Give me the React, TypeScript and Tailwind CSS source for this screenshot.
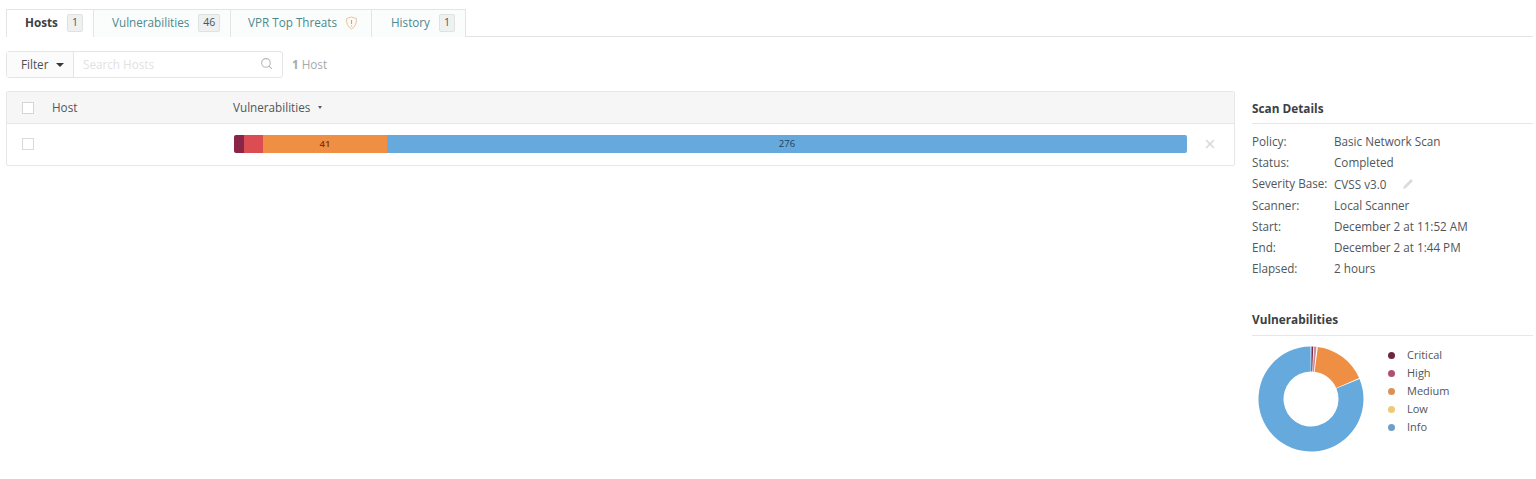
import { Search, X } from 'lucide-react';

const details = [
  ['Policy:', 'Basic Network Scan'],
  ['Status:', 'Completed'],
  ['Severity Base:', 'CVSS v3.0'],
  ['Scanner:', 'Local Scanner'],
  ['Start:', 'December 2 at 11:52 AM'],
  ['End:', 'December 2 at 1:44 PM'],
  ['Elapsed:', '2 hours'],
];

const legend = [
  ['Critical', 'bg-[#6d2743]'],
  ['High', 'bg-[#b0506f]'],
  ['Medium', 'bg-[#d9915c]'],
  ['Low', 'bg-[#eccb77]'],
  ['Info', 'bg-[#6f9fc8]'],
];

function slice(start: number, end: number) {
  const R = 52.5;
  const r = 27.5;
  const pt = (rad: number, deg: number) => {
    const a = (deg * Math.PI) / 180;
    return `${(rad * Math.sin(a)).toFixed(2)} ${(-rad * Math.cos(a)).toFixed(2)}`;
  };
  const large = end - start > 180 ? 1 : 0;
  return `M${pt(R, start)} A${R} ${R} 0 ${large} 1 ${pt(R, end)} L${pt(r, end)} A${r} ${r} 0 ${large} 0 ${pt(r, start)} Z`;
}

function Tab({ label, count, active, className }: { label: string; count?: string; active?: boolean; className: string }) {
  return (
    <div className={`flex h-[28px] items-center gap-[9px] border-t border-r border-[#e2e5e6] pb-[2px] ${active ? 'mb-[-1px] border-l bg-white font-bold text-[#3a4044]' : 'bg-[#fbfcfc] text-[#4a8a8e]'} ${className}`}>
      <span>{label}</span>
      {count && <span className="flex h-[18px] min-w-[16px] items-center justify-center rounded-[2px] border border-[#e0e2e2] bg-[#eff0f0] px-[4px] text-[10.5px] font-normal text-[#4d5357]">{count}</span>}
      {!count && (
        <svg width="13" height="14" viewBox="0 0 13 14" fill="none" className="ml-[-1px]">
          <path d="M6.5 1 L11.5 2.5 C11.8 7.5 10 11 6.5 13 C3 11 1.2 7.5 1.5 2.5 Z" stroke="#e6c6a6" strokeWidth="1" fill="#fefaf5" />
          <path d="M6.5 4 V8 M6.5 9.4 V10.4" stroke="#c9a488" strokeWidth="1.1" />
        </svg>
      )}
    </div>
  );
}

export default function App() {
  return (
    <div className="h-[479px] w-[1536px] overflow-hidden bg-white pt-[9px] font-['Open_Sans',sans-serif] text-[11.7px] text-[#50565a]">
      <div className="ml-[6px] mr-[3px] flex h-[28px] border-b border-[#e2e5e6]">
        <Tab label="Hosts" count="1" active className="w-[88px] pl-[18px]" />
        <Tab label="Vulnerabilities" count="46" className="w-[137px] pl-[18px]" />
        <Tab label="VPR Top Threats" className="w-[141px] pl-[17px]" />
        <Tab label="History" count="1" className="w-[94px] pl-[19px]" />
      </div>

      <div className="ml-[6px] mt-[14px] flex items-center">
        <div className="flex h-[27px] w-[277px] rounded-[3px] border border-[#e3e5e6]">
          <div className="flex w-[67px] items-center gap-[8px] border-r border-[#e3e5e6] bg-[#fbfbfb] pl-[14px] text-[#4b5054]">
            Filter
            <svg width="8" height="4" viewBox="0 0 8 4"><path d="M0 0H8L4 4Z" fill="#33383b" /></svg>
          </div>
          <div className="flex flex-1 items-center justify-between px-[9px] text-[#dfe2e3]">
            Search Hosts
            <Search size={13} className="mb-[2px] text-[#b5b9bb]" />
          </div>
        </div>
        <div className="ml-[9px] text-[#a5a9ab]"><span className="font-bold">1</span> Host</div>
      </div>

      <div className="mt-[13px] flex">
        <div className="ml-[6px] w-[1229px]">
          <div className="h-[75px] rounded-[2px] border border-[#e5e7e8]">
            <div className="flex h-[32px] items-center border-b border-[#e5e7e8] bg-[#f6f6f7] pl-[15px]">
              <div className="h-[12px] w-[12px] border border-[#d3d5d6] bg-white" />
              <div className="ml-[18px] w-[181px]">Host</div>
              <div className="flex items-center gap-[8px]">
                Vulnerabilities
                <svg width="4" height="3" viewBox="0 0 5 4"><path d="M0 0H5L2.5 4Z" fill="#50565a" /></svg>
              </div>
            </div>
            <div className="flex h-[40px] items-center pl-[15px]">
              <div className="h-[12px] w-[12px] border border-[#d9dbdc] bg-white" />
              <div className="ml-[200px] flex h-[18px] w-[953px] overflow-hidden rounded-[2px] text-center text-[9.5px] font-semibold leading-[18px]">
                <div className="w-[10px] bg-[#8a2449]" />
                <div className="w-[19px] bg-[#dc4d53]" />
                <div className="w-[124px] bg-[#ee8f43] text-[#7d3312]">41</div>
                <div className="flex-1 bg-[#66a9dc] font-normal text-[#23405a]">276</div>
              </div>
              <X size={14} strokeWidth={2.75} className="ml-[16px] text-[#d7d9da]" />
            </div>
          </div>
        </div>

        <div className="ml-[17px] w-[281px]">
          <div className="h-[33px] border-b border-[#e5e7e8] pt-[8px] text-[11.8px] font-bold leading-[18px] text-[#3a4044]">Scan Details</div>
          <div className="mt-[7.6px]">
            {details.map(([k, v]) => (
              <div key={k} className="flex h-[21.1px] items-center">
                <span className={k === 'Severity Base:' ? 'mb-[1px] w-[82px]' : 'w-[82px]'}>{k}</span>
                <span className={k === 'Severity Base:' ? 'mt-[1px]' : ''}>{v}</span>
                {k === 'Severity Base:' && (
                  <svg width="12" height="12" viewBox="0 0 12 12" className="ml-[16px]"><path d="M1 11 L2 8 L9 1 L11 3 L4 10 Z" fill="#d9dbdc" /></svg>
                )}
              </div>
            ))}
          </div>
          <div className="mt-[24.1px] h-[33px] border-b border-[#e5e7e8] pt-[7px] text-[11.8px] font-bold leading-[18px] text-[#3a4044]">Vulnerabilities</div>
          <div className="mt-[10px] flex">
            <svg width="106" height="106" viewBox="-53 -53 106 106" className="ml-[6px]">
              <path d={slice(0.5, 2.5)} fill="#7d2a47" />
              <path d={slice(3.5, 6)} fill="#c98a9a" />
              <path d={slice(7.5, 66.5)} fill="#ee8f43" />
              <path d={slice(67.5, 359.5)} fill="#66a9dc" />
            </svg>
            <div className="ml-[24px] text-[11px]">
              {legend.map(([name, color]) => (
                <div key={name} className="flex h-[18px] items-center">
                  <span className={`h-[7px] w-[7px] rounded-full ${color}`} />
                  <span className="ml-[12px]">{name}</span>
                </div>
              ))}
            </div>
          </div>
        </div>
      </div>
    </div>
  );
}
